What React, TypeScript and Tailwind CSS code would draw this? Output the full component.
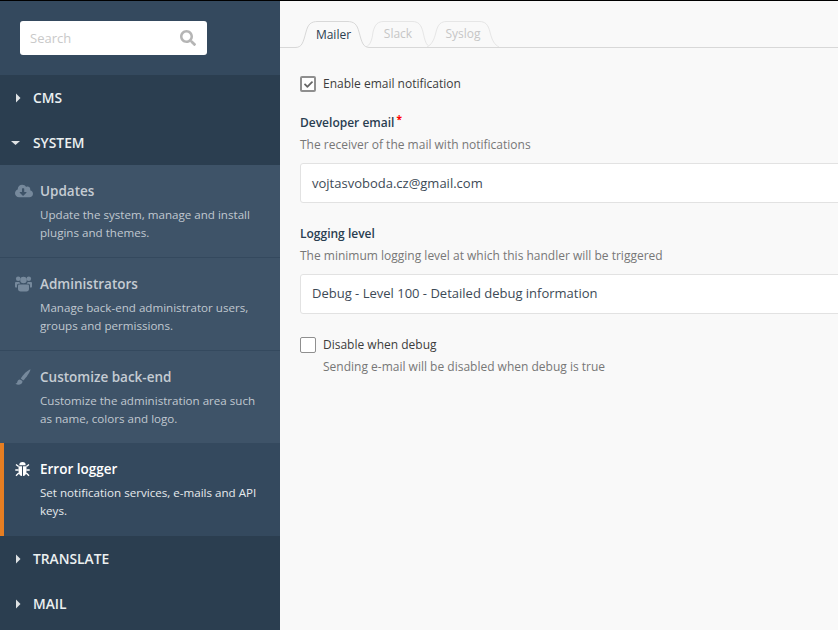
import React from "react";
import { FaCloudDownloadAlt, FaSearch, FaCheck } from "react-icons/fa";

function Caret({ open }: { open?: boolean }) {
  return (
    <svg width="10" height="10" viewBox="0 0 10 10" className="shrink-0" aria-hidden="true">
      {open ? <path d="M0 3h9L4.500 7z" fill="#dfe2e4" /> : <path d="M3 .5v9L7.500 5z" fill="#dfe2e4" />}
    </svg>
  );
}

function UsersIcon() {
  return (
    <svg width="17" height="16" viewBox="0 0 17 16" fill="currentColor" aria-hidden="true">
      <circle cx="3.200" cy="2.800" r="2.300" />
      <circle cx="13.800" cy="2.800" r="2.300" />
      <circle cx="8.500" cy="4" r="3.300" />
      <path d="M4 8.500h9a1 1 0 0 1 1 1V13c0 1.500-1 2.500-2.500 2.500h-6C4 15.500 3 14.500 3 13V9.500a1 1 0 0 1 1-1z" />
      <path d="M1 6h3.400c.3 1 .8 1.500 1 1.800H3.500C2.600 7.800 2 8.500 2 9.500V11.500H.8C.3 11.500 0 11 0 10.500V7a1 1 0 0 1 1-1z" />
      <path d="M16 6h-3.400c-.3 1-.8 1.500-1 1.800h1.900c.9 0 1.500.7 1.500 1.700V11.500h1.200c.5 0 .8-.5.8-1V7a1 1 0 0 0-1-1z" />
    </svg>
  );
}

function BrushIcon() {
  return (
    <svg width="16" height="16" viewBox="0 0 16 16" fill="currentColor" aria-hidden="true">
      <path d="M15.500 .3C13 1 8 5.500 5.800 9.500L8.200 11.500C11 9 15 3.500 15.500 .3z" />
      <path d="M5 10.500C3 10.500 2.500 12 2.300 13C2.200 14 1 14.500 .3 14.500C2 16 4.500 16 6 15C7.500 14 7.800 12.500 7.200 11.800z" />
    </svg>
  );
}

function BugIcon() {
  return (
    <svg width="15" height="16" viewBox="0 0 15 16" fill="currentColor" aria-hidden="true">
      <path d="M4.300 4.300a3.200 3.200 0 0 1 6.400 0z" />
      <path d="M3.500 5.200H7V15C5 15 3.500 13 3.500 10z" />
      <path d="M11.500 5.200H8V15C10 15 11.500 13 11.500 10z" />
      <path
        d="M3.600 5.500L1 3.500M3.600 9H0.300M3.800 12L1 14.700M11.400 5.500L14 3.500M11.400 9H14.700M11.200 12L14 14.700"
        stroke="currentColor"
        strokeWidth="1.400"
        fill="none"
      />
    </svg>
  );
}

function Group({ label, open }: { label: string; open?: boolean }) {
  return (
    <div className="h-[45px] flex items-center bg-[#2b3e50] text-[#ecf0f1] text-[13.800px] leading-[20px] font-semibold">
      <div className={open ? "w-[33px] pl-[11px]" : "w-[33px] pl-[13px]"}>
        <Caret open={open} />
      </div>
      <span>{label}</span>
    </div>
  );
}

function Item({
  icon,
  title,
  lines,
  active,
  last,
}: {
  icon: React.ReactNode;
  title: string;
  lines: string[];
  active?: boolean;
  last?: boolean;
}) {
  return (
    <div
      className={
        active
          ? "h-[93px] flex bg-[#34495e] border-l-4 border-[#e67e22] pl-[11px] pt-[16px]"
          : last
            ? "h-[92px] flex bg-[#3e5368] pl-[15px] pt-[16px]"
            : "h-[93px] flex bg-[#3e5368] border-b border-[#34495e] pl-[15px] pt-[16px]"
      }
    >
      <div className={active ? "w-[25px] h-[20px] flex items-center text-white" : "w-[25px] h-[20px] flex items-center text-[#76899c]"}>
        {icon}
      </div>
      <div>
        <div className={active ? "text-[13.500px] font-semibold leading-[20px] text-white" : "text-[13.500px] font-semibold leading-[20px] text-[#c5ccd3]"}>
          {title}
        </div>
        <div className={active ? "mt-[5px] text-[11.600px] leading-[18px] text-[#e6eaed]" : "mt-[5px] text-[11.600px] leading-[18px] text-[#c0c8d0]"}>
          {lines.map((l) => (
            <div key={l}>{l}</div>
          ))}
        </div>
      </div>
    </div>
  );
}

function Tab({ label, active, wide }: { label: string; active?: boolean; wide?: boolean }) {
  if (active) {
    return (
      <div className="relative z-10 w-[75px] h-[27px] flex items-center justify-center text-[12px] text-[#2b3e50]">
        <svg className="absolute inset-0 w-[75px] h-[27px]" viewBox="0 0 75 27" aria-hidden="true">
          <path d="M0 27V26.500C7 26.500 8 22 11 11C13 3 16 .5 23 .5H52C59 .5 62 3 64 11C67 22 68 26.500 75 26.500V27z" fill="#f9f9f9" />
          <path d="M0 26.500C7 26.500 8 22 11 11C13 3 16 .5 23 .5H52C59 .5 62 3 64 11C67 22 68 26.500 75 26.500" fill="none" stroke="#d8d8d8" />
        </svg>
        <span className="relative pl-[2px]">{label}</span>
      </div>
    );
  }
  return (
    <div className={wide ? "relative -ml-[3px] w-[72px] h-[26px] flex items-center justify-center text-[12px] font-medium text-[#c6c6c6]" : "relative -ml-[4px] w-[64px] h-[26px] flex items-center justify-center text-[12px] font-medium text-[#c6c6c6]"}>
      <svg className="absolute inset-0 w-full h-full" viewBox={wide ? "0 0 72 26" : "0 0 64 26"} aria-hidden="true">
        {wide ? (
          <path d="M0 26C4 24 7 20 9 11C11 3 14 .5 20 .5H52C58 .5 61 3 63 11C65 20 68 24 72 26" fill="#f9f9f9" stroke="#e6e6e6" />
        ) : (
          <path d="M0 26C4 24 6 20 7 11C9 3 12 .5 18 .5H46C52 .5 55 3 57 11C59 20 60 24 64 26" fill="#f9f9f9" stroke="#e6e6e6" />
        )}
      </svg>
      <span className="relative">{label}</span>
    </div>
  );
}

export default function App() {
  return (
    <div className="w-[838px] h-[630px] overflow-hidden flex flex-col bg-[#f9f9f9] font-['Open_Sans',sans-serif]">
      <div className="h-px bg-black shrink-0" />
      <div className="flex flex-1 min-h-0">
        <aside className="w-[280px] shrink-0 bg-[#2b3e50]">
          <div className="h-[74px] bg-[#34495e] pt-[20px] pl-[20px]">
            <div className="w-[187px] h-[34px] bg-white rounded-[3px] flex items-center justify-between pl-[10px] pr-[11px]">
              <span className="text-[13px] text-[#c9c9c9] pt-[1px]">Search</span>
              <FaSearch className="text-[#b5b5b5] w-[16px] h-[16px]" />
            </div>
          </div>
          <Group label="CMS" />
          <Group label="SYSTEM" open />
          <Item
            icon={<FaCloudDownloadAlt className="w-[18px] h-[16px]" />}
            title="Updates"
            lines={["Update the system, manage and install", "plugins and themes."]}
          />
          <Item icon={<UsersIcon />} title="Administrators" lines={["Manage back-end administrator users,", "groups and permissions."]} />
          <Item
            icon={<BrushIcon />}
            title="Customize back-end"
            lines={["Customize the administration area such", "as name, colors and logo."]}
            last
          />
          <Item
            icon={<BugIcon />}
            title="Error logger"
            lines={["Set notification services, e-mails and API", "keys."]}
            active
          />
          <Group label="TRANSLATE" />
          <Group label="MAIL" />
        </aside>
        <main className="flex-1 min-w-0">
          <div className="pt-[20px] border-b border-[#d8d8d8] h-[47px] pl-[15px] flex">
            <Tab label="Mailer" active />
            <Tab label="Slack" />
            <Tab label="Syslog" wide />
          </div>
          <div className="pl-[20px] pt-[27px] text-[#333]">
            <div className="flex items-center h-[18px]">
              <div className="w-[16px] h-[16px] rounded-[2px] border-2 border-[#8f8f8f] bg-white flex items-center justify-center">
                <FaCheck className="w-[9px] h-[9px] text-[#666]" />
              </div>
              <span className="ml-[7px] text-[12px] text-[#3c3c3c]">Enable email notification</span>
            </div>
            <div className="mt-[21px] flex text-[12px] font-semibold leading-[18px] text-[#2a3e51]">
              Developer email
              <span className="ml-[2px] -mt-[4px] text-[#ff0000] text-[10px] font-bold">*</span>
            </div>
            <div className="mt-[4px] text-[12px] leading-[18px] text-[#777]">The receiver of the mail with notifications</div>
            <div className="mt-[9px] h-[40px] w-[560px] bg-white border border-[#e2e2e2] rounded-[3px] flex items-center pl-[11px] pt-[1px] text-[13px] text-[#3d4a56]">
              vojtasvoboda.cz@gmail.com
            </div>
            <div className="mt-[22px] text-[12px] font-semibold leading-[18px] text-[#2a3e51]">Logging level</div>
            <div className="mt-[4px] text-[12px] leading-[18px] text-[#777]">The minimum logging level at which this handler will be triggered</div>
            <div className="mt-[9px] h-[40px] w-[560px] bg-white border border-[#e2e2e2] rounded-[3px] flex items-center pl-[11px] text-[13px] text-[#3d4a56]">
              Debug - Level 100 - Detailed debug information
            </div>
            <div className="mt-[22px] flex items-center h-[18px]">
              <div className="w-[16px] h-[16px] rounded-[2px] border border-[#8f8f8f] bg-white" />
              <span className="ml-[7px] text-[12px] text-[#3c3c3c]">Disable when debug</span>
            </div>
            <div className="mt-[4px] ml-[23px] text-[12px] leading-[18px] text-[#777]">Sending e-mail will be disabled when debug is true</div>
          </div>
        </main>
      </div>
    </div>
  );
}
